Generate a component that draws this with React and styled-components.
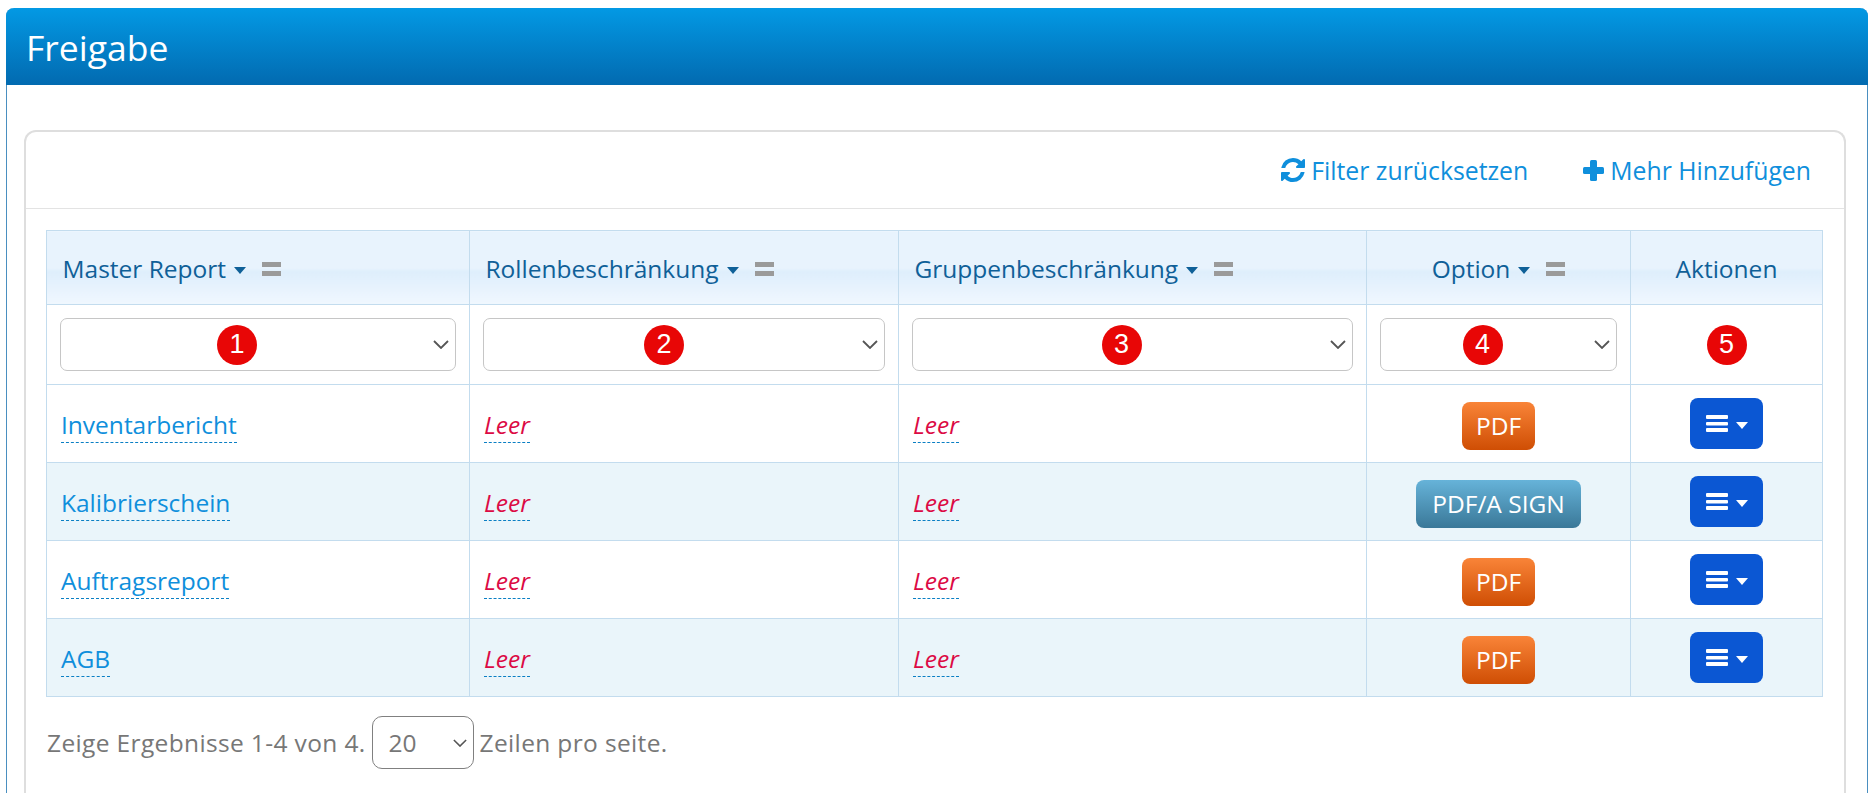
import React from "react";
import styled, { createGlobalStyle } from "styled-components";

const CHEVRON =
  "data:image/svg+xml,%3Csvg xmlns='http://www.w3.org/2000/svg' viewBox='0 0 16 9'%3E%3Cpath d='M1 1l7 7 7-7' fill='none' stroke='%23555' stroke-width='1.8'/%3E%3C/svg%3E";

const GlobalStyle = createGlobalStyle`
  html, body {
    margin: 0;
    height: 100%;
    overflow: hidden;
    background: #fff;
    font-family: "Open Sans", "Noto Sans", sans-serif;
  }
`;

const Page = styled.div`
  height: 100vh;
  box-sizing: border-box;
  padding: 8px 1px 0 6px;
`;
const Panel = styled.div`
  height: 100%;
  box-sizing: border-box;
  display: flex;
  flex-direction: column;
  border-left: 1px solid #4a8fc0;
  border-right: 1px solid #4a8fc0;
  border-radius: 8px 8px 0 0;
`;
const PanelHeader = styled.header`
  height: 77px;
  margin: 0 -1px;
  box-sizing: border-box;
  padding: 0 20px 0 20px;
  display: flex;
  align-items: center;
  border-radius: 8px 8px 0 0;
  background: linear-gradient(#0399e4, #026ab0);
  color: #fff;
  font-size: 35.5px;
`;
const PanelBody = styled.div`
  flex: 1;
  min-height: 0;
  display: flex;
  padding: 45px 21px 0 17px;
`;
const Card = styled.section`
  flex: 1;
  box-sizing: border-box;
  border: 2px solid #dedede;
  border-bottom: 0;
  border-radius: 12px 12px 0 0;
`;
const Toolbar = styled.div`
  height: 77px;
  box-sizing: border-box;
  border-bottom: 1px solid #e3e3e3;
  display: flex;
  align-items: center;
  justify-content: flex-end;
  gap: 55px;
  padding: 0 33px 0 0;
`;
const ToolLink = styled.a`
  display: inline-flex;
  align-items: center;
  gap: 6px;
  color: #0f8fdc;
  font-size: 24.8px;
`;
const Content = styled.div`
  padding: 21px 19px 0 20px;
`;
const Table = styled.table`
  width: 1776px;
  table-layout: fixed;
  border-collapse: collapse;
  font-size: 24.5px;
  td, th {
    border: 1px solid #c3dcee;
    padding: 0 14px;
    box-sizing: border-box;
  }
`;
const HeadCell = styled.th`
  height: 74px;
  padding: 2px 14px 0 ${(p) => (p.$center ? "14px" : "15.5px")} !important;
  font-weight: 400;
  color: #0f6098;
  text-align: ${(p) => (p.$center ? "center" : "left")};
  background: linear-gradient(#e8f3fd 0%, #e8f3fd 50%, #deeefc 55%, #f0f7fe 100%);
`;
const HeadInner = styled.span`
  display: inline-flex;
  align-items: center;
  gap: 8px;
`;
const Caret = styled.i`
  display: inline-block;
  width: 0;
  height: 0;
  margin-top: 3px;
  border-left: 6.5px solid transparent;
  border-right: 6.5px solid transparent;
  border-top: 7px solid ${(p) => p.$color || "#0f6098"};
`;
const Sort = styled.i`
  display: inline-block;
  width: 19px;
  height: 14px;
  margin-left: 8px;
  border-top: 5px solid #9a9a9a;
  border-bottom: 5px solid #9a9a9a;
  box-sizing: border-box;
`;
const FilterCell = styled.td`
  height: 80px;
  padding: 0 13px !important;
  position: relative;
  text-align: center;
  background: #fff;
`;
const FilterSelect = styled.select`
  appearance: none;
  width: 100%;
  height: 53px;
  box-sizing: border-box;
  display: block;
  background: #fff url("${CHEVRON}") no-repeat right 6px center / 16px 9px;
  border: 1px solid #c6c6c6;
  border-radius: 7px;
  font-size: 20px;
`;
const Badge = styled.span`
  width: 40px;
  height: 40px;
  display: inline-flex;
  align-items: center;
  justify-content: center;
  border-radius: 50%;
  background: #e80606;
  color: #fff;
  font-family: "Liberation Sans", sans-serif;
  font-size: 27px;
`;
const FloatBadge = styled(Badge)`
  position: absolute;
  top: 50%;
  left: 50%;
  margin: -20px 0 0 ${(p) => p.$shift}px;
`;
const Row = styled.tr`
  background: ${(p) => (p.$alt ? "#eaf5fa" : "#fff")};
  td { height: 78px; }
`;
const Editable = styled.a`
  position: relative;
  top: 1px;
  color: ${(p) => (p.$empty ? "#dc0a44" : "#0f8fdc")};
  font-style: ${(p) => (p.$empty ? "italic" : "normal")};
  border-bottom: 1px dashed #0a7fc4;
  padding-bottom: 1px;
`;
const CenterCell = styled.td`
  text-align: center;
`;
const ExportButton = styled.button`
  height: 48px;
  margin-top: 4px;
  padding: 0 ${(p) => (p.$sign ? "16px" : "14px")};
  border: 0;
  border-radius: 8px;
  color: #fff;
  font: inherit;
  vertical-align: middle;
  background: ${(p) =>
    p.$sign
      ? "linear-gradient(#66b3d9, #3a7898)"
      : "linear-gradient(#f98438, #cf4e04)"};
`;
const MenuButton = styled.button`
  width: 73px;
  height: 51px;
  border: 0;
  border-radius: 8px;
  background: #0b57d3;
  color: #fff;
  display: inline-flex;
  align-items: center;
  justify-content: center;
  gap: 8px;
  vertical-align: middle;
`;
const Footer = styled.div`
  margin-top: 19px;
  padding-left: 1px;
  display: flex;
  align-items: center;
  gap: 6px;
  color: #777;
  font-size: 24.5px;
  letter-spacing: 0.36px;
`;
const PageSize = styled.select`
  appearance: none;
  width: 102px;
  height: 53px;
  box-sizing: border-box;
  padding-left: 16px;
  background: #fff url("${CHEVRON}") no-repeat right 6px center / 14px 8px;
  border: 1px solid #808080;
  border-radius: 10px;
  color: #777;
  font: inherit;
`;

const COLUMNS = [
  { label: "Master Report", width: 423, shift: -41 },
  { label: "Rollenbeschränkung", width: 429, shift: -40 },
  { label: "Gruppenbeschränkung", width: 468, shift: -31 },
  { label: "Option", width: 264, center: true, shift: -36 },
];

const ROWS = [
  { name: "Inventarbericht", option: "PDF" },
  { name: "Kalibrierschein", option: "PDF/A SIGN", sign: true },
  { name: "Auftragsreport", option: "PDF" },
  { name: "AGB", option: "PDF" },
];

function RefreshIcon() {
  return (
    <svg width="24" height="24" viewBox="128 128 1536 1536" fill="currentColor">
      <path d="M1639 1056q0 5-1 7-64 268-268 434.5t-478 166.5q-146 0-282.5-55t-243.5-157l-129 129q-19 19-45 19t-45-19-19-45v-448q0-26 19-45t45-19h448q26 0 45 19t19 45-19 45l-137 137q71 66 161 102t187 36q134 0 250-65t186-179q11-17 53-117 8-23 30-23h192q13 0 22.5 9.5t9.5 22.5zm25-800v448q0 26-19 45t-45 19h-448q-26 0-45-19t-19-45 19-45l138-138q-148-137-349-137-134 0-250 65t-186 179q-11 17-53 117-8 23-30 23h-199q-13 0-22.5-9.5t-9.5-22.5v-7q65-268 270-434.5t480-166.5q146 0 284 55.5t245 156.5l130-129q19-19 45-19t45 19 19 45z" />
    </svg>
  );
}

function PlusIcon() {
  return (
    <svg width="21" height="21" viewBox="0 0 21 21" fill="currentColor">
      <rect x="0" y="7" width="21" height="7" rx="1.5" />
      <rect x="7" y="0" width="7" height="21" rx="1.5" />
    </svg>
  );
}

function BarsIcon() {
  return (
    <svg width="22" height="17" viewBox="0 0 22 17" fill="currentColor">
      <rect x="0" y="0" width="22" height="4" rx="1" />
      <rect x="0" y="7" width="22" height="3.6" rx="1" />
      <rect x="0" y="13" width="22" height="4" rx="1" />
    </svg>
  );
}

export default function App() {
  return (
    <Page>
      <GlobalStyle />
      <Panel>
        <PanelHeader>Freigabe</PanelHeader>
        <PanelBody>
          <Card>
            <Toolbar>
              <ToolLink>
                <RefreshIcon />
                Filter zurücksetzen
              </ToolLink>
              <ToolLink>
                <PlusIcon />
                Mehr Hinzufügen
              </ToolLink>
            </Toolbar>
            <Content>
              <Table>
                <colgroup>
                  {COLUMNS.map((c) => (
                    <col key={c.label} width={c.width} />
                  ))}
                  <col width={192} />
                </colgroup>
                <thead>
                  <tr>
                    {COLUMNS.map((c) => (
                      <HeadCell key={c.label} $center={c.center}>
                        <HeadInner>
                          {c.label}
                          <Caret />
                          <Sort />
                        </HeadInner>
                      </HeadCell>
                    ))}
                    <HeadCell $center>Aktionen</HeadCell>
                  </tr>
                  <tr>
                    {COLUMNS.map((c, i) => (
                      <FilterCell key={c.label}>
                        <FilterSelect />
                        <FloatBadge $shift={c.shift}>{i + 1}</FloatBadge>
                      </FilterCell>
                    ))}
                    <FilterCell>
                      <Badge>5</Badge>
                    </FilterCell>
                  </tr>
                </thead>
                <tbody>
                  {ROWS.map((r, i) => (
                    <Row key={r.name} $alt={i % 2 === 1}>
                      <td>
                        <Editable>{r.name}</Editable>
                      </td>
                      <td>
                        <Editable $empty>Leer</Editable>
                      </td>
                      <td>
                        <Editable $empty>Leer</Editable>
                      </td>
                      <CenterCell>
                        <ExportButton $sign={r.sign}>{r.option}</ExportButton>
                      </CenterCell>
                      <CenterCell>
                        <MenuButton>
                          <BarsIcon />
                          <Caret $color="#fff" />
                        </MenuButton>
                      </CenterCell>
                    </Row>
                  ))}
                </tbody>
              </Table>
              <Footer>
                Zeige Ergebnisse 1-4 von 4.
                <PageSize defaultValue="20">
                  <option>20</option>
                </PageSize>
                Zeilen pro seite.
              </Footer>
            </Content>
          </Card>
        </PanelBody>
      </Panel>
    </Page>
  );
}
